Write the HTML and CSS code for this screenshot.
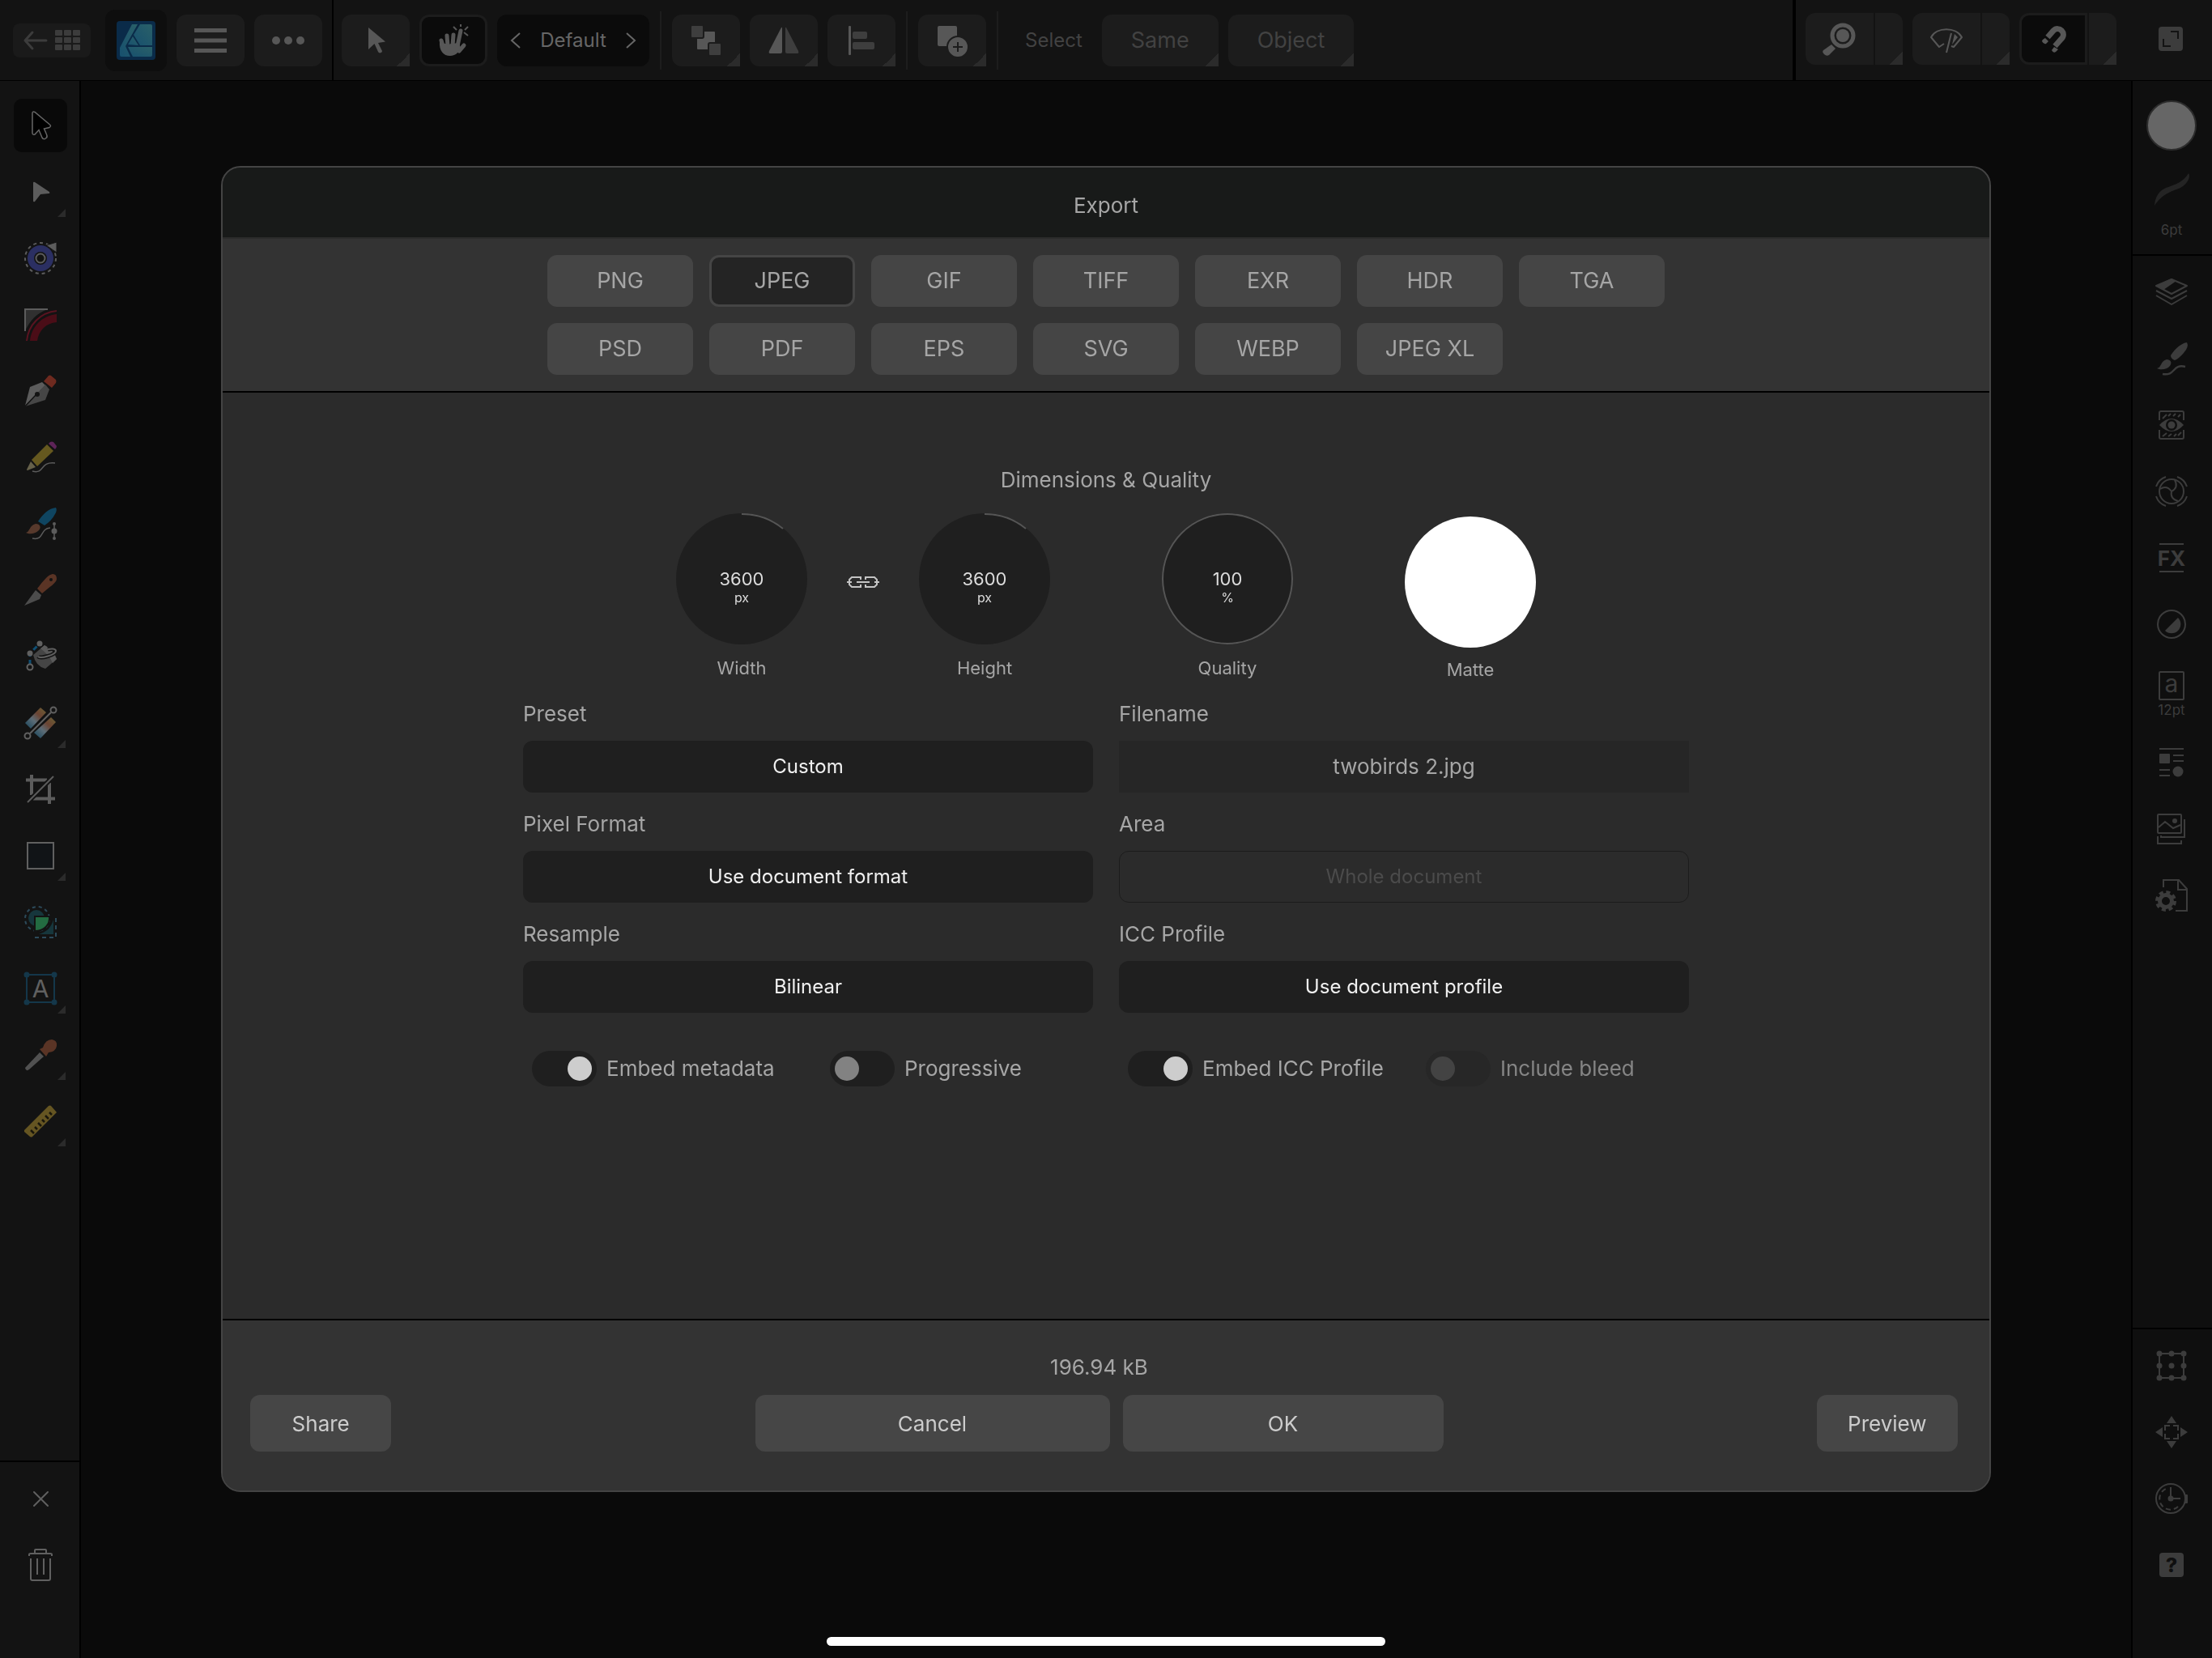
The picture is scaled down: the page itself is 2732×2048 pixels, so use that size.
FILE: index.html
```html
<!DOCTYPE html>
<html lang="en">

<head>
  <meta charset="UTF-8">
  <meta name="viewport" content="width=device-width, initial-scale=1.0">
  <title>Export</title>
  <link rel="stylesheet" href="styles.css">
</head>

<body>
  <header class="topbar">
    <div class="bar-group app-group">
      <button class="back-btn" aria-label="Back to gallery">
        <svg width="72" height="26" viewBox="0 0 72 26">
          <path d="M12 3L3 13l9 10M3 13h26" fill="none" stroke="#3c3c3c" stroke-width="3" stroke-linecap="round" stroke-linejoin="round"/>
          <g fill="#3c3c3c">
            <rect x="40" y="0" width="9" height="7" rx="1"/><rect x="51" y="0" width="9" height="7" rx="1"/><rect x="62" y="0" width="9" height="7" rx="1"/>
            <rect x="40" y="9" width="9" height="7" rx="1"/><rect x="51" y="9" width="9" height="7" rx="1"/><rect x="62" y="9" width="9" height="7" rx="1"/>
            <rect x="40" y="18" width="9" height="7" rx="1"/><rect x="51" y="18" width="9" height="7" rx="1"/><rect x="62" y="18" width="9" height="7" rx="1"/>
          </g>
        </svg>
      </button>
      <button class="logo-btn" aria-label="Designer persona">
        <svg width="48" height="48" viewBox="0 0 48 48">
          <defs>
            <linearGradient id="logo-fill" x1="0" y1="1" x2="1" y2="0">
              <stop offset="0" stop-color="#17506e"/>
              <stop offset="1" stop-color="#2a6068"/>
            </linearGradient>
          </defs>
          <rect width="48" height="48" rx="4" fill="#0a2b49"/>
          <g fill="url(#logo-fill)">
            <path d="M19 4h7L11 31l6 13H6q-2 0-2-2v-9z"/>
            <path d="M29 4h13q2 0 2 2v24H29l-8-13z"/>
            <path d="M20 19l7 11-13-1z"/>
            <path d="M14 32h30v10q0 2-2 2H20z"/>
          </g>
        </svg>
      </button>
      <button class="tool-btn" aria-label="Menu">
        <svg width="40" height="32" viewBox="0 0 40 32"><path d="M0 3.500h40M0 16h40M0 28.500h40" stroke="#575757" stroke-width="5"/></svg>
      </button>
      <button class="tool-btn" aria-label="More">
        <svg width="40" height="10" viewBox="0 0 40 10"><g fill="#575757"><circle cx="5" cy="5" r="5"/><circle cx="20" cy="5" r="5"/><circle cx="35" cy="5" r="5"/></g></svg>
      </button>
    </div>

    <div class="bar-group edit-group">
      <button class="tool-btn has-more" aria-label="Select tool">
        <svg width="40" height="40" viewBox="0 0 40 40"><path d="M11 4l21 17.500-9 1.500 5 10q0 2-2 2.300-2 .5-3-1.300l-4.500-10L11 31z" fill="#575757"/></svg>
      </button>
      <button class="tool-btn active" aria-label="Touch gestures">
        <svg width="40" height="40" viewBox="0 0 40 40">
          <path d="M5 20l3 10M12 14l1 13M20 13l-1 14M29 8l-4 19M33 26l-6 7" fill="none" stroke="#575757" stroke-width="5" stroke-linecap="round"/>
          <path d="M3 21q9 5 14 3l10-1 2 7c-3 5-7 9-13 9C8 39 2 33 3 21z" fill="#575757"/>
          <path d="M20 3l4 4M29 0v3M38 3l-4 4M33 10l5 4" stroke="#575757" stroke-width="2"/>
        </svg>
      </button>
      <div class="stepper">
        <button class="step" aria-label="Previous"><svg width="14" height="20" viewBox="0 0 14 20"><path d="M12 1L2 10l10 9" fill="none" stroke="#666" stroke-width="2"/></svg></button>
        <span>Default</span>
        <button class="step" aria-label="Next"><svg width="14" height="20" viewBox="0 0 14 20"><path d="M2 1l10 9-10 9" fill="none" stroke="#666" stroke-width="2"/></svg></button>
      </div>
      <i class="sep"></i>
      <button class="tool-btn has-more" aria-label="Arrange">
        <svg width="40" height="40" viewBox="0 0 40 40">
          <rect x="9" y="9" width="22" height="22" rx="1" fill="#575757"/>
          <g fill="#3e3e3e" stroke="#1c1c1c" stroke-width="2"><rect x="1" y="1" width="16" height="16" rx="2"/><rect x="23" y="23" width="16" height="16" rx="2"/></g>
        </svg>
      </button>
      <button class="tool-btn has-more" aria-label="Flip">
        <svg width="40" height="40" viewBox="0 0 40 40"><path d="M17 4q1-1 1 1v29q0 2-2 2H3q-2 0-1-3z" fill="#575757"/><path d="M23 4q-1-1-1 1v29q0 2 2 2h13q2 0 1-3z" fill="#3e3e3e"/></svg>
      </button>
      <button class="tool-btn has-more" aria-label="Align">
        <svg width="40" height="40" viewBox="0 0 40 40"><rect x="4" y="2" width="3" height="36" rx="1" fill="#575757"/><g fill="#3e3e3e"><rect x="9" y="9" width="18" height="9" rx="2"/><rect x="9" y="22" width="27" height="9" rx="2"/></g></svg>
      </button>
      <i class="sep"></i>
      <button class="tool-btn has-more" aria-label="Add geometry">
        <svg width="40" height="40" viewBox="0 0 40 40">
          <rect x="2" y="2" width="24" height="25" rx="2" fill="#575757"/>
          <circle cx="27" cy="28" r="13" fill="#575757" stroke="#1c1c1c" stroke-width="2"/>
          <path d="M27 22v12M21 28h12" stroke="#1c1c1c" stroke-width="2"/>
        </svg>
      </button>
      <i class="sep"></i>
      <span class="bar-label">Select</span>
      <button class="tool-btn text-btn has-more">Same</button>
      <button class="tool-btn text-btn has-more">Object</button>
    </div>

    <div class="bar-group view-group">
      <div class="split">
        <button class="split-main" aria-label="Zoom">
          <svg width="44" height="44" viewBox="0 0 44 44"><circle cx="26" cy="18" r="13" fill="none" stroke="#575757" stroke-width="5"/><circle cx="26" cy="18" r="8" fill="#575757"/><path d="M12 29l5 5-8 8q-3 2-6-1t-1-5z" fill="#575757"/></svg>
        </button>
        <button class="split-more has-more" aria-label="Zoom options"></button>
      </div>
      <div class="split">
        <button class="split-main" aria-label="Preview mode">
          <svg width="40" height="40" viewBox="0 0 40 40"><path d="M17 26l-6 4L1 18C8 5 32 5 39 18L29 30l-3-1" fill="none" stroke="#575757" stroke-width="2" stroke-linejoin="round"/><path d="M26 13l-6 24" stroke="#575757" stroke-width="2"/><path d="M30 14l4 4-7 9z" fill="#575757"/></svg>
        </button>
        <button class="split-more has-more" aria-label="Preview options"></button>
      </div>
      <div class="split">
        <button class="split-main active" aria-label="Snapping">
          <svg width="40" height="40" viewBox="0 0 40 40"><path d="M13 18l7-8c7-7 17 3 10 10l-8 9" fill="none" stroke="#575757" stroke-width="7"/><path d="M10 19q-4 2-4 4 2 4 5 3l3-3zM21 30l-3 4q2 4 5 2l3-3z" fill="#575757"/></svg>
        </button>
        <button class="split-more has-more" aria-label="Snapping options"></button>
      </div>
      <button class="plain-btn" aria-label="Toggle interface">
        <svg width="30" height="30" viewBox="0 0 30 30"><rect width="30" height="30" rx="4" fill="#3c3c3c"/><path d="M15 6h9v9M6 15v9h9" fill="none" stroke="#131313" stroke-width="2"/></svg>
      </button>
    </div>
  </header>

  <main class="workspace">
    <nav class="side tools-side">
      <div class="side-list">
        <button class="side-btn selected" aria-label="Move Tool"><svg viewBox="0 0 40 40"><path d="M10 5v24q0 3 3 2l5-5.500L22 35q2 3 5 .5 2-1.500.5-4.500l-3-7 6.500-1.500q3-2 0-4L13 3.500Q10 2 10 5z" fill="#000" stroke="#666" stroke-width="1.500"/></svg></button>
        <button class="side-btn corner" aria-label="Node Tool"><svg viewBox="0 0 40 40"><path d="M11 9q0-2 2-1l18 12q1 2-1 2l-10 1-7 9q-2 1-2-1z" fill="#5c5c5c"/></svg></button>
        <button class="side-btn" aria-label="Point Transform Tool"><svg viewBox="0 0 40 40"><circle cx="20" cy="20" r="19" fill="none" stroke="#5c5c5c" stroke-width="2" stroke-dasharray="4 4"/><circle cx="20" cy="20" r="16" fill="#2b2f62"/><circle cx="20" cy="20" r="8" fill="#131313"/><circle cx="20" cy="20" r="5.500" fill="none" stroke="#5c5c5c" stroke-width="2"/><path d="M27 4L40 0v13z" fill="#5c5c5c" stroke="#131313"/></svg></button>
        <button class="side-btn" aria-label="Contour Tool"><svg viewBox="0 0 40 40"><path d="M1 1h28C15 6 7 15 1 28z" fill="#303030"/><path d="M1 28V1h28" fill="none" stroke="#5c5c5c" stroke-width="2"/><path d="M3 40C5 20 20 5 40 3" fill="none" stroke="#5a1320" stroke-width="2"/><path d="M7 40C9 22 22 9 40 7v10C27 18 18 27 16 40z" fill="#4a0d17"/></svg></button>
        <button class="side-btn" aria-label="Pen Tool"><svg viewBox="0 0 40 40"><path d="M24 8l6-7q2-1 3 0l6 5q1 2 0 4l-5 6z" fill="#6e2a1f"/><path d="M1 38l6-23 15-6 4 4z" fill="#5c5c5c"/><path d="M1 39l25-27 5 6-5 13z" fill="#464646"/><path d="M1 39l14-15" stroke="#131313" stroke-width="1.500"/><circle cx="16" cy="24" r="3" fill="#131313"/></svg></button>
        <button class="side-btn" aria-label="Pencil Tool"><svg viewBox="0 0 40 40"><path d="M30 3l2-2q2-1 4 0l4 5q0 2-2 4z" fill="#5e2458"/><path d="M28 4l8 8-20 19-7-8z" fill="#65581f"/><path d="M8 25l6 7-10 4q-1 0-1-1z" fill="#66614a"/><path d="M10 37c16 4 8-12 28-10" fill="none" stroke="#5c5c5c" stroke-width="1.500"/></svg></button>
        <button class="side-btn" aria-label="Vector Brush Tool"><svg viewBox="0 0 40 40"><path d="M17 17C23 8 30 1 39 0q2 3-1 8-4 8-13 14z" fill="#0f4561"/><path d="M2 31c5-1 4-9 12-11 6 0 7 5 4 8-5 5-12 5-16 3z" fill="#57392c"/><path d="M10 38c15 3 9-12 22-13M37 19v19" fill="none" stroke="#5c5c5c" stroke-width="1.500"/><g fill="#5c5c5c"><circle cx="37" cy="20" r="2"/><circle cx="37" cy="29" r="3.500"/><circle cx="37" cy="38" r="2"/></g></svg></button>
        <button class="side-btn" aria-label="Knife Tool"><svg viewBox="0 0 40 40"><path d="M16 18C24 8 29 1 35 0q5 0 5 6c0 5-9 10-18 18z" fill="#5a3425"/><circle cx="33" cy="7" r="2" fill="#131313"/><path d="M14 20l7 6-2 5L0 39z" fill="#4c4c4c"/></svg></button>
        <button class="side-btn" aria-label="Flood Fill Tool"><svg viewBox="0 0 40 40"><path d="M7 30V16l11-11" fill="none" stroke="#0f4f74" stroke-width="3" stroke-dasharray="6 4"/><path d="M11 18L25 6q12 6 15 17L26 35q-12-3-15-17z" fill="#454545"/><path d="M20 10l5-4q10 5 15 17l-5 5q-4-10-15-18z" fill="#5a5a5a"/><path d="M17 20c3 3 22-2 22-7 0-3-6-3-10-2" fill="none" stroke="#131313" stroke-width="5"/><path d="M17 20c3 3 22-2 22-7 0-3-6-3-10-2" fill="none" stroke="#606060" stroke-width="2"/><g fill="#606060"><circle cx="19" cy="4" r="3.500"/><circle cx="7" cy="16" r="3.500"/></g><circle cx="7" cy="33" r="3.500" fill="#131313" stroke="#606060" stroke-width="2"/></svg></button>
        <button class="side-btn corner" aria-label="Gradient Tool"><svg viewBox="0 0 40 40"><defs><linearGradient id="strip" x1="0" y1="1" x2="1" y2="0"><stop offset="0" stop-color="#15435a"/><stop offset=".4" stop-color="#5c6c76"/><stop offset=".65" stop-color="#6b4433"/><stop offset="1" stop-color="#6b6134"/></linearGradient></defs><path d="M1 20L20 1l7 6L8 27z" fill="url(#strip)"/><path d="M12 32l21-19 6 6-19 20z" fill="url(#strip)"/><path d="M7 33L33 7" stroke="#606060" stroke-width="2"/><g fill="#131313" stroke="#606060" stroke-width="2"><circle cx="4" cy="36" r="3.500"/><circle cx="36" cy="4" r="3.500"/></g></svg></button>
        <button class="side-btn" aria-label="Crop Tool"><svg viewBox="0 0 40 40"><path d="M9 2v25M2 8.500h26M31 12v26M11 31.500h27" stroke="#5c5c5c" stroke-width="4"/><path d="M4 36L36 4" stroke="#131313" stroke-width="6"/><path d="M4 36L36 4" stroke="#5c5c5c" stroke-width="2"/></svg></button>
        <button class="side-btn corner" aria-label="Rectangle Tool"><svg viewBox="0 0 40 40"><rect x="4" y="4" width="32" height="32" fill="#111417" stroke="#606060" stroke-width="2"/></svg></button>
        <button class="side-btn" aria-label="Shape Builder Tool"><svg viewBox="0 0 40 40"><circle cx="16" cy="16" r="15" fill="none" stroke="#2c4a5a" stroke-width="2" stroke-dasharray="4 4"/><path d="M39 15v24H14v-5" fill="none" stroke="#2c4a5a" stroke-width="2" stroke-dasharray="5 4"/><circle cx="15" cy="15" r="10" fill="#16363c"/><path d="M18 35C28 32 33 27 36 17v18z" fill="#16363c"/><path d="M13 13h18c1 10-6 18-18 18z" fill="#236b41" stroke="#131313" stroke-width="2"/></svg></button>
        <button class="side-btn corner" aria-label="Text Tool"><svg viewBox="0 0 40 40"><rect x="3" y="3" width="34" height="34" fill="none" stroke="#14374a" stroke-width="2"/><g fill="#14374a"><circle cx="3" cy="3" r="3.500"/><circle cx="37" cy="3" r="3.500"/><circle cx="3" cy="37" r="3.500"/><circle cx="37" cy="37" r="3.500"/></g><text x="20" y="31" font-size="30" text-anchor="middle" fill="#606060">A</text></svg></button>
        <button class="side-btn corner" aria-label="Colour Picker Tool"><svg viewBox="0 0 40 40"><path d="M1 36L19 17l5 5L6 38q-4 3-5-2z" fill="#515151"/><path d="M19 13l4-2q3-10 11-10 7 1 6 8-1 7-10 8l-3 5z" fill="#5a3425"/></svg></button>
        <button class="side-btn corner" aria-label="Measure Tool"><svg viewBox="0 0 40 40"><path d="M0 31L30 1q2-1 3 0l7 8L10 39q-1 1-3 0L0 33z" fill="#655522"/><path d="M8 31l4 4M13 27l3 3M17 22l4 4M22 18l3 3M26 13l4 4M31 9l3 3" stroke="#1a170c" stroke-width="2.500"/></svg></button>
      </div>
      <div class="side-foot">
        <button class="side-btn" aria-label="Deselect"><svg viewBox="0 0 40 40"><path d="M12 12l17 17M29 12L12 29" stroke="#606060" stroke-width="2" stroke-linecap="round"/></svg></button>
        <button class="side-btn" aria-label="Delete"><svg viewBox="0 0 40 40"><path d="M6 9V7q0-1 2-1h24q2 0 2 1v2M13 6V2q0-1 1-1h12q1 0 1 1v4M8 12v25q0 2 2 2h20q2 0 2-2V12M16 12v20M24 12v20" fill="none" stroke="#606060" stroke-width="2"/></svg></button>
      </div>
    </nav>

    <section class="canvas"></section>

    <aside class="side studio-side">
      <div class="side-head">
        <button class="color-well" aria-label="Colour"></button>
        <button class="stroke-btn">
          <svg width="46" height="42" viewBox="0 0 46 42"><path d="M2 40C6 10 30 24 44 1c3 4-1 13-10 18C22 24 12 26 2 41z" fill="#242424"/></svg>
          <span>6pt</span>
        </button>
      </div>
      <div class="side-list">
        <button class="side-btn" aria-label="Layers"><svg viewBox="0 0 40 40"><g fill="none" stroke="#3c3c3c" stroke-width="2" stroke-linejoin="round"><path d="M20 4l19 8-19 10L1 12zM1 18l19 10 19-10M1 24l19 11 19-11"/></g><path d="M20 3l6 3L10 17l-9-5z" fill="#3c3c3c"/></svg></button>
        <button class="side-btn" aria-label="Brushes"><svg viewBox="0 0 40 40"><path d="M19 16C25 7 32 1 39 0q3 5-4 13-6 7-11 9-5-2-5-6z" fill="#3c3c3c"/><path d="M2 32c6-1 4-9 12-11 5 0 7 4 4 8-4 5-12 5-16 3z" fill="#3c3c3c"/><path d="M9 39c16 3 12-13 28-9" fill="none" stroke="#3c3c3c" stroke-width="2.500"/></svg></button>
        <button class="side-btn" aria-label="Appearance"><svg viewBox="0 0 40 40"><path d="M5 14V5q0-2 2-2h26q2 0 2 2v9M5 26v9q0 2 2 2h26q2 0 2-2v-9" fill="none" stroke="#3c3c3c" stroke-width="2"/><path d="M9 12l5-5M16 9l3-3M22 9l3-3M28 10l3-3M9 34l5-4M16 34l4-3M23 34l3-3M28 33l4-4" stroke="#3c3c3c" stroke-width="2"/><path d="M5 20Q20 4 35 20 20 36 5 20z" fill="#3c3c3c"/><circle cx="20" cy="20" r="7" fill="#0f0f0f"/><circle cx="20" cy="20" r="4.500" fill="#3c3c3c"/></svg></button>
        <button class="side-btn" aria-label="Styles"><svg viewBox="0 0 40 40"><g fill="none" stroke="#3c3c3c" stroke-width="2"><circle cx="20" cy="20" r="15"/><path d="M20 20q-6-8-14-3M20 20q9-5 4-14M20 20q-2 9 8 12M1 14Q4 5 13 2M27 2q9 3 12 12M39 26q-3 9-12 12M13 38Q4 35 1 26"/></g></svg></button>
        <button class="side-btn" aria-label="Layer FX"><svg viewBox="0 0 40 40"><path d="M5 3h30M5 37h30" stroke="#3c3c3c" stroke-width="2"/><text x="20" y="30" font-size="26" font-weight="700" text-anchor="middle" fill="#3c3c3c">FX</text></svg></button>
        <button class="side-btn" aria-label="Adjustments"><svg viewBox="0 0 40 40"><circle cx="20" cy="20" r="17" fill="none" stroke="#3c3c3c" stroke-width="2"/><path d="M28 12a11 11 0 0 1-16 16z" fill="#3c3c3c"/></svg></button>
        <button class="side-btn text-studio">
          <svg viewBox="0 0 40 40"><rect x="5" y="3" width="30" height="34" rx="1" fill="none" stroke="#3c3c3c" stroke-width="2"/><text x="20" y="28" font-size="30" text-anchor="middle" fill="#3c3c3c">a</text></svg>
          <span>12pt</span>
        </button>
        <button class="side-btn" aria-label="Assets"><svg viewBox="0 0 40 40"><path d="M5 3h30M22 11h13M22 18h13M5 29h13M5 36h13" stroke="#3c3c3c" stroke-width="2"/><rect x="5" y="9" width="13" height="12" rx="1" fill="#3c3c3c"/><circle cx="28" cy="31" r="6.500" fill="#3c3c3c"/></svg></button>
        <button class="side-btn" aria-label="Stock"><svg viewBox="0 0 40 40"><g fill="none" stroke="#3c3c3c" stroke-width="2"><rect x="3" y="2" width="29" height="23" rx="1"/><path d="M4 18l8-7 10 8 9-4M36 8v22H7v-2M3 29v9h29v-4"/></g><circle cx="24" cy="10" r="3" fill="#3c3c3c"/></svg></button>
        <button class="side-btn" aria-label="Document settings"><svg viewBox="0 0 40 40"><path d="M10 10V1h19l10 11v27H25M28 1v12h11" fill="none" stroke="#3c3c3c" stroke-width="2"/><circle cx="13" cy="27" r="7.500" fill="none" stroke="#3c3c3c" stroke-width="5"/><circle cx="13" cy="27" r="11" fill="none" stroke="#3c3c3c" stroke-width="4" stroke-dasharray="5 3.640"/></svg></button>
      </div>
      <div class="side-foot">
        <button class="side-btn" aria-label="Transform"><svg viewBox="0 0 40 40"><rect x="5" y="5" width="30" height="30" fill="none" stroke="#3c3c3c" stroke-width="2"/><g fill="#3c3c3c"><circle cx="5" cy="5" r="3.500"/><circle cx="20" cy="5" r="3.500"/><circle cx="35" cy="5" r="3.500"/><circle cx="5" cy="20" r="3.500"/><circle cx="20" cy="20" r="3.500"/><circle cx="35" cy="20" r="3.500"/><circle cx="5" cy="35" r="3.500"/><circle cx="20" cy="35" r="3.500"/><circle cx="35" cy="35" r="3.500"/></g></svg></button>
        <button class="side-btn" aria-label="Navigator"><svg viewBox="0 0 40 40"><path d="M20 0l6 9H14zM20 40l6-9H14zM0 20l9-6v12zM40 20l-9-6v12z" fill="#3c3c3c"/><path d="M12 18v-6h6M22 12h6v6M28 22v6h-6M18 28h-6v-6" fill="none" stroke="#3c3c3c" stroke-width="2"/></svg></button>
        <button class="side-btn" aria-label="History"><svg viewBox="0 0 40 40"><circle cx="19" cy="20" r="18" fill="none" stroke="#3c3c3c" stroke-width="2"/><path d="M19 6v14h12" fill="none" stroke="#3c3c3c" stroke-width="2"/><circle cx="19" cy="20" r="3.500" fill="#3c3c3c"/><path d="M28 30a13.500 13.500 0 1 1-12-23" fill="none" stroke="#3c3c3c" stroke-width="2" stroke-dasharray="6 4"/><rect x="36" y="15" width="4" height="11" rx="1" fill="#3c3c3c"/></svg></button>
        <button class="side-btn" aria-label="Help"><svg viewBox="0 0 40 40"><rect x="5" y="5" width="30" height="30" rx="4" fill="#3c3c3c"/><text x="20" y="29" font-size="25" font-weight="800" text-anchor="middle" fill="#0f0f0f">?</text></svg></button>
      </div>
    </aside>
  </main>

  <div class="overlay">
    <form class="dialog" role="dialog" aria-labelledby="dialog-title">
      <h1 class="dialog-title" id="dialog-title">Export</h1>

      <div class="formats">
        <button type="button">PNG</button>
        <button type="button" class="current">JPEG</button>
        <button type="button">GIF</button>
        <button type="button">TIFF</button>
        <button type="button">EXR</button>
        <button type="button">HDR</button>
        <button type="button">TGA</button>
        <button type="button">PSD</button>
        <button type="button">PDF</button>
        <button type="button">EPS</button>
        <button type="button">SVG</button>
        <button type="button">WEBP</button>
        <button type="button">JPEG XL</button>
      </div>

      <div class="dialog-body">
        <h2 class="section-title">Dimensions &amp; Quality</h2>
        <div class="dials">
          <label class="dial">
            <span class="dial-face">
              <svg viewBox="0 0 162 162"><path d="M81 1a80 80 0 0 1 51 18" fill="none" stroke="#555" stroke-width="2"/></svg>
              <input type="text" value="3600">
              <small>px</small>
            </span>
            Width
          </label>
          <button type="button" class="link-btn" aria-label="Link width and height">
            <svg width="40" height="16" viewBox="0 0 40 16"><path d="M17 5V2H6L3 5v6l3 3h11v-3M23 5V2h11l3 3v6l-3 3H23v-3M0 8h6M12 8h16M34 8h6" fill="none" stroke="#c4c4c4" stroke-width="2"/></svg>
          </button>
          <label class="dial">
            <span class="dial-face">
              <svg viewBox="0 0 162 162"><path d="M81 1a80 80 0 0 1 51 18" fill="none" stroke="#555" stroke-width="2"/></svg>
              <input type="text" value="3600">
              <small>px</small>
            </span>
            Height
          </label>
          <label class="dial">
            <span class="dial-face">
              <svg viewBox="0 0 162 162"><circle cx="81" cy="81" r="80" fill="none" stroke="#555" stroke-width="2"/></svg>
              <input type="text" value="100">
              <small>%</small>
            </span>
            Quality
          </label>
          <div class="dial matte">
            <button type="button" class="dial-face" aria-labelledby="matte-label"></button>
            <span id="matte-label">Matte</span>
          </div>
        </div>

        <div class="fields">
          <div class="field">
            <label for="preset">Preset</label>
            <select id="preset"><option>Custom</option></select>
          </div>
          <div class="field">
            <label for="filename">Filename</label>
            <input type="text" id="filename" value="twobirds 2.jpg">
          </div>
          <div class="field">
            <label for="pixel-format">Pixel Format</label>
            <select id="pixel-format"><option>Use document format</option></select>
          </div>
          <div class="field">
            <label for="area">Area</label>
            <select id="area" disabled><option>Whole document</option></select>
          </div>
          <div class="field">
            <label for="resample">Resample</label>
            <select id="resample"><option>Bilinear</option></select>
          </div>
          <div class="field">
            <label for="icc-profile">ICC Profile</label>
            <select id="icc-profile"><option>Use document profile</option></select>
          </div>
        </div>

        <div class="toggles">
          <label class="toggle"><input type="checkbox" checked>Embed metadata</label>
          <label class="toggle"><input type="checkbox">Progressive</label>
          <label class="toggle"><input type="checkbox" checked>Embed ICC Profile</label>
          <label class="toggle disabled"><input type="checkbox" disabled>Include bleed</label>
        </div>
      </div>

      <footer class="dialog-footer">
        <p class="file-size">196.94 kB</p>
        <div class="actions">
          <button type="button" class="side-action">Share</button>
          <div class="main-actions">
            <button type="button" class="cancel">Cancel</button>
            <button type="button" class="ok">OK</button>
          </div>
          <button type="button" class="side-action">Preview</button>
        </div>
      </footer>
    </form>
    <div class="home-indicator"></div>
  </div>
</body>

</html>
```

FILE: styles.css
```css
/* Basic Reset */
* {
  margin: 0;
  padding: 0;
  box-sizing: border-box;
}

body {
  display: flex;
  flex-direction: column;
  min-height: 100vh;
  font-family: Inter, "Liberation Sans", sans-serif;
  font-size: 26px;
  color: #a6a6a6;
  background-color: #0a0a0a;
}

button,
input,
select {
  font: inherit;
  color: inherit;
  background: none;
  border: none;
}

button {
  cursor: pointer;
}

svg {
  display: block;
  overflow: visible;
}

/* Top bar */
.topbar {
  display: flex;
  height: 100px;
  background-color: #131313;
  border-bottom: 1px solid #000;
}

.bar-group {
  display: flex;
  align-items: center;
  gap: 12px;
}

.app-group {
  padding: 0 12px 0 16px;
  border-right: 2px solid #000;
}

.edit-group {
  padding-left: 10px;
}

.view-group {
  margin-left: auto;
  padding: 0 36px 4px 12px;
  border-left: 4px solid #000;
}

.back-btn {
  display: flex;
  align-items: center;
  justify-content: center;
  width: 96px;
  height: 42px;
  margin-right: 6px;
  border-radius: 8px;
  background-color: #1a1a1a;
}

.logo-btn {
  display: flex;
  align-items: center;
  justify-content: center;
  width: 76px;
  height: 76px;
  border-radius: 12px;
  background-color: #0e0e0e;
}

.tool-btn {
  display: flex;
  align-items: center;
  justify-content: center;
  min-width: 84px;
  height: 64px;
  border-radius: 12px;
  background-color: #1c1c1c;
}

.tool-btn.active,
.split-main.active {
  background-color: #0b0b0b;
  border: 3px solid #1c1c1c;
}

.has-more {
  border-bottom-right-radius: 0;
  background-image: linear-gradient(135deg, transparent 50%, #2b2b2b 50%);
  background-repeat: no-repeat;
  background-position: right bottom;
  background-size: 16px 16px;
}

.stepper {
  display: flex;
  align-items: center;
  justify-content: space-between;
  width: 188px;
  height: 64px;
  padding: 0 16px;
  border-radius: 12px;
  background-color: #0b0b0b;
  color: #666;
  font-size: 24px;
}

.sep {
  width: 2px;
  height: 72px;
  margin: 0 1px;
  background-color: #1d1d1d;
}

.bar-label {
  padding: 0 12px 0 20px;
  font-size: 24px;
  color: #424242;
}

.text-btn {
  padding: 0 36px;
  font-size: 27px;
  color: #424242;
}

.split {
  display: flex;
  gap: 2px;
}

.split-main {
  display: flex;
  align-items: center;
  justify-content: center;
  width: 84px;
  height: 64px;
  border-radius: 12px 0 0 12px;
  background-color: #1c1c1c;
}

.split-more {
  width: 34px;
  height: 64px;
  border-radius: 0 12px 0 0;
  background-color: #1c1c1c;
}

.plain-btn {
  padding-left: 40px;
}

/* Sidebars */
.workspace {
  display: flex;
  flex: 1;
}

.canvas {
  flex: 1;
}

.side {
  display: flex;
  flex-direction: column;
  width: 100px;
}

.tools-side {
  background-color: #131313;
  border-right: 2px solid #000;
}

.studio-side {
  background-color: #0f0f0f;
  border-left: 2px solid #000;
}

.side-list {
  display: flex;
  flex-direction: column;
  flex: 1;
  align-items: center;
}

.tools-side .side-list {
  padding: 14px 0 0 2px;
}

.studio-side .side-list {
  padding: 4px 2px 0 0;
}

.side-btn {
  display: flex;
  flex-direction: column;
  align-items: center;
  justify-content: center;
  position: relative;
  width: 66px;
  height: 66px;
  margin: 8px 0;
  border-radius: 10px;
}

.side-btn svg {
  width: 40px;
  height: 40px;
}

.side-btn.selected {
  background-color: #090909;
}

.side-btn.corner::after {
  content: "";
  position: absolute;
  right: 2px;
  bottom: 2px;
  border-left: 10px solid transparent;
  border-bottom: 10px solid #2b2b2b;
}

.side-btn.text-studio {
  height: 73px;
  font-size: 17px;
  color: #3c3c3c;
}

.side-foot {
  display: flex;
  flex-direction: column;
  align-items: center;
  border-top: 2px solid #000;
}

.tools-side .side-foot {
  height: 244px;
  padding: 4px 0 0 2px;
}

.studio-side .side-foot {
  height: 408px;
  padding: 4px 2px 0 0;
}

.side-head {
  display: flex;
  flex-direction: column;
  align-items: center;
  height: 216px;
  padding: 24px 2px 0 0;
  border-bottom: 2px solid #000;
}

.color-well {
  width: 62px;
  height: 62px;
  border: 2px solid #2c2c2c;
  border-radius: 50%;
  background-color: #666;
}

.stroke-btn {
  display: flex;
  flex-direction: column;
  align-items: center;
  gap: 19px;
  margin-top: 27px;
  font-size: 17px;
  color: #3c3c3c;
}

/* Export dialog */
.overlay {
  display: flex;
  align-items: center;
  justify-content: center;
  position: fixed;
  inset: 0;
}

.dialog {
  display: flex;
  flex-direction: column;
  width: 80%;
  height: 80%;
  overflow: hidden;
  border: 2px solid #444;
  border-radius: 24px;
  background-color: #2b2b2b;
}

.dialog-title {
  height: 88px;
  padding-top: 7px;
  border-bottom: 2px solid #2b2b2b;
  background-color: #181a19;
  font-size: 26px;
  font-weight: 400;
  line-height: 80px;
  text-align: center;
}

.formats {
  display: grid;
  grid-template-columns: repeat(7, 180px);
  gap: 20px;
  justify-content: center;
  padding: 20px 0;
  border-bottom: 2px solid #000;
  background-color: #333;
}

.formats button {
  height: 64px;
  border-radius: 12px;
  background-color: #454545;
  font-size: 27px;
}

.formats .current {
  border: 3px solid #454545;
  background-color: #242424;
}

.dialog-body {
  display: flex;
  flex-direction: column;
  align-items: center;
  flex: 1;
  padding-top: 92px;
}

.section-title {
  font-size: 26px;
  font-weight: 400;
  line-height: 32px;
}

/* Dials */
.dials {
  display: grid;
  grid-template-columns: 162px 138px 162px 138px 162px 138px 162px;
  align-items: start;
  margin-top: 25px;
}

.dial {
  display: flex;
  flex-direction: column;
  align-items: center;
  gap: 14px;
  font-size: 22px;
  line-height: 30px;
}

.dial:nth-of-type(3) {
  grid-column: 5;
}

.dial-face {
  display: flex;
  flex-direction: column;
  align-items: center;
  justify-content: center;
  position: relative;
  width: 162px;
  height: 162px;
  border-radius: 50%;
  background-color: #1f1f1f;
  color: #dcdcdc;
}

.dial-face svg {
  position: absolute;
  inset: 0;
}

.dial-face input {
  width: 100px;
  height: 26px;
  margin-top: 20px;
  text-align: center;
}

.dial-face small {
  font-size: 16px;
  line-height: 20px;
}

.matte {
  grid-column: 7;
  gap: 12px;
  padding-top: 4px;
}

.matte .dial-face {
  background-color: #fff;
}

.link-btn {
  display: flex;
  align-items: center;
  justify-content: center;
  height: 170px;
}

/* Fields */
.fields {
  display: grid;
  grid-template-columns: 704px 704px;
  gap: 21px 32px;
  margin-top: 22px;
}

.field {
  display: flex;
  flex-direction: column;
  gap: 15px;
}

.field label {
  font-size: 26px;
  line-height: 36px;
}

.field select,
.field input {
  width: 100%;
  height: 64px;
  appearance: none;
  text-align: center;
  text-align-last: center;
}

.field select {
  border-radius: 12px;
  background-color: #1f1f1f;
  color: #f0f0f0;
  font-size: 24px;
}

.field select:disabled {
  border: 1px solid #1c1c1c;
  background-color: transparent;
  color: #4b4b4b;
  opacity: 1;
}

.field input {
  background-color: #262626;
  font-size: 26px;
}

/* Toggles */
.toggles {
  display: grid;
  grid-template-columns: repeat(4, 368px);
  width: 1440px;
  margin-top: 47px;
  padding-left: 11px;
}

.toggle {
  display: flex;
  align-items: center;
  gap: 12px;
  font-size: 26px;
}

.toggle input {
  display: flex;
  align-items: center;
  width: 80px;
  height: 44px;
  padding: 0 6px;
  appearance: none;
  border-radius: 22px;
  background-color: #1f1f1f;
}

.toggle input::before {
  content: "";
  width: 30px;
  height: 30px;
  border-radius: 50%;
  background-color: #828282;
}

.toggle input:checked {
  justify-content: flex-end;
}

.toggle input:checked::before {
  background-color: #cdcdcd;
}

.toggle.disabled {
  color: #858585;
}

.toggle.disabled input {
  background-color: #272727;
}

.toggle.disabled input::before {
  background-color: #434343;
}

/* Footer */
.dialog-footer {
  padding: 42px 39px 48px 34px;
  border-top: 2px solid #000;
  background-color: #333;
}

.file-size {
  padding-right: 12px;
  font-size: 26px;
  line-height: 32px;
  text-align: center;
}

.actions {
  display: flex;
  justify-content: space-between;
  margin-top: 18px;
}

.actions button {
  height: 70px;
  border-radius: 12px;
  background-color: #464646;
  color: #ccc;
  font-size: 26px;
}

.side-action {
  width: 174px;
}

.main-actions {
  display: flex;
  gap: 16px;
  padding-right: 12px;
}

.cancel {
  width: 438px;
}

.ok {
  width: 396px;
}

.home-indicator {
  position: absolute;
  bottom: 15px;
  width: 690px;
  height: 11px;
  border-radius: 6px;
  background-color: #fff;
}
```
